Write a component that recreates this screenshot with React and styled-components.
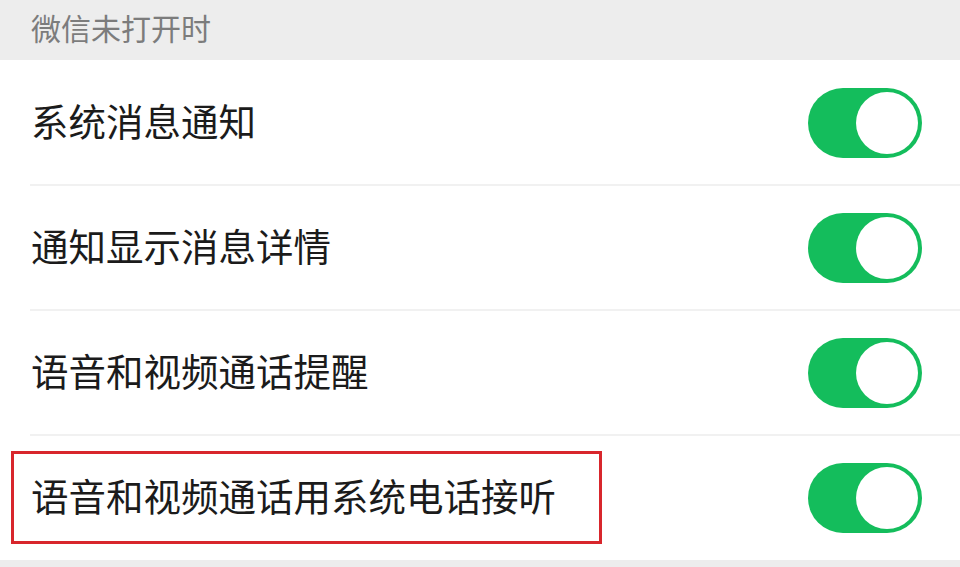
import styled, { createGlobalStyle } from 'styled-components'

const GlobalStyle = createGlobalStyle`
  html, body {
    margin: 0;
    padding: 0;
    background: #ededed;
    font-family: "Noto Sans CJK SC", "Noto Sans", sans-serif;
  }
`

const StyledPage = styled.div`
  width: 960px;
  height: 567px;
  background: #ededed;
  overflow: hidden;
`

const SectionTitle = styled.div`
  height: 60px;
  box-sizing: border-box;
  display: flex;
  align-items: center;
  padding: 0 0 6px 31px;
  font-size: 30px;
  color: #7c7c7c;
`

const List = styled.div`
  background: #ffffff;
`

const Row = styled.div`
  height: 125px;
  display: flex;
  align-items: center;
  justify-content: space-between;
  padding: 0 38px 0 31px;
  position: relative;

  & + &::before {
    content: '';
    position: absolute;
    top: -1px;
    left: 30px;
    right: 0;
    height: 2px;
    background: #f1f1f1;
  }
`

const Label = styled.div`
  font-size: 37.5px;
  color: #1b1b1b;
  display: flex;
  align-items: center;
  box-sizing: border-box;
  padding-bottom: 6px;

  ${props => props.highlighted && `
    height: 93px;
    margin-left: -20px;
    padding: 0 43px 6px 17px;
    border: 3px solid #d8262c;
  `}
`

const Switch = styled.div`
  width: 114px;
  height: 70px;
  border-radius: 35px;
  background: ${props => props.on ? '#14bd5c' : '#e5e5e5'};
  display: flex;
  align-items: center;
  justify-content: ${props => props.on ? 'flex-end' : 'flex-start'};
  padding: 0 4px;
  box-sizing: border-box;
  flex-shrink: 0;
`

const Knob = styled.div`
  width: 62px;
  height: 62px;
  border-radius: 50%;
  background: #ffffff;
`

const settings = [
  { title: '系统消息通知', on: true },
  { title: '通知显示消息详情', on: true },
  { title: '语音和视频通话提醒', on: true },
  { title: '语音和视频通话用系统电话接听', on: true, highlighted: true }
]

const App = () => (
  <StyledPage>
    <GlobalStyle />
    <SectionTitle>微信未打开时</SectionTitle>
    <List>
      {settings.map(item => (
        <Row key={item.title}>
          <Label highlighted={item.highlighted}>{item.title}</Label>
          <Switch on={item.on}>
            <Knob />
          </Switch>
        </Row>
      ))}
    </List>
  </StyledPage>
)

export default App
